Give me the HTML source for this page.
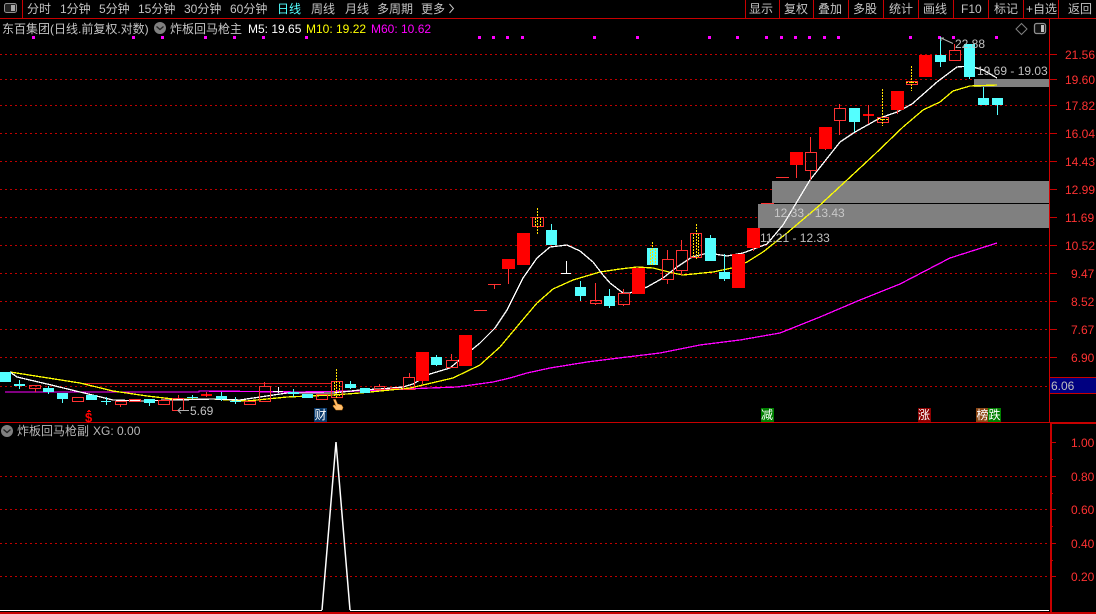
<!DOCTYPE html>
<html><head><meta charset="utf-8"><style>
html,body{margin:0;padding:0;background:#000;width:1096px;height:614px;overflow:hidden}
svg{display:block}
text{font-family:"Liberation Sans","WenQuanYi Zen Hei","Noto Sans CJK SC",sans-serif;font-size:12px;white-space:pre}
.c{shape-rendering:crispEdges}
</style></head><body>
<svg width="1096" height="614" viewBox="0 0 1096 614" xmlns="http://www.w3.org/2000/svg">
<rect width="1096" height="614" fill="#000"/>
<!-- grid -->
<g class="c" stroke="#c00000" stroke-width="1" stroke-dasharray="2 3" fill="none">
<path d="M0 54.5H1049M0 79.5H1049M0 105.5H1049M0 133.5H1049M0 161.5H1049M0 189.5H1049M0 217.5H1049M0 245.5H1049M0 273.5H1049M0 301.5H1049M0 329.5H1049M0 357.5H1049M0 386.5H1049"/>
<path d="M0 476.5H1049M0 509.5H1049M0 543.5H1049M0 576.5H1049"/>
</g>
<!-- frame -->
<g class="c" fill="#c80000">
<rect x="0" y="18" width="1096" height="1"/>
<rect x="22" y="0" width="1" height="18"/>
<rect x="745" y="0" width="1" height="18"/><rect x="779" y="0" width="1" height="18"/><rect x="813" y="0" width="1" height="18"/><rect x="848" y="0" width="1" height="18"/><rect x="883" y="0" width="1" height="18"/><rect x="918" y="0" width="1" height="18"/><rect x="953" y="0" width="1" height="18"/><rect x="988" y="0" width="1" height="18"/><rect x="1023" y="0" width="1" height="18"/><rect x="1058" y="0" width="1" height="18"/>
<rect x="0" y="422" width="1096" height="1"/>
<rect x="1050" y="423" width="46" height="1"/>
<rect x="1050" y="423" width="2" height="190"/>
<rect x="0" y="612" width="1096" height="2"/>
<path d="M1050 54h7v1h-7zM1050 79h7v1h-7zM1050 105h7v1h-7zM1050 133h7v1h-7zM1050 161h7v1h-7zM1050 189h7v1h-7zM1050 217h7v1h-7zM1050 245h7v1h-7zM1050 273h7v1h-7zM1050 301h7v1h-7zM1050 329h7v1h-7zM1050 357h7v1h-7z"/>
<path d="M1052 442h4v1h-4zM1052 476h4v1h-4zM1052 509h4v1h-4zM1052 543h4v1h-4zM1052 576h4v1h-4zM1052 459h1v1h-1zM1052 493h1v1h-1zM1052 526h1v1h-1zM1052 560h1v1h-1z"/>
</g>
<!-- blue price box -->
<rect class="c" x="1050" y="377" width="46" height="16" fill="#000080"/>
<rect class="c" x="1050" y="377" width="46" height="1" fill="#c80000"/>
<rect class="c" x="1050" y="393" width="46" height="1" fill="#c80000"/>
<!-- gray zones -->
<g class="c" fill="#808080">
<rect x="772" y="181" width="277" height="22"/>
<rect x="758" y="204" width="291" height="24"/>
<rect x="974" y="79" width="75" height="8"/>
</g>
<rect class="c" x="1049" y="19" width="1" height="403" fill="#d00000"/>
<!-- level line -->
<rect class="c" x="80" y="383" width="251" height="1" fill="#e02020"/>
<!-- magenta dots -->
<path class="c" fill="#ff00ff" d="M32 36h3v3h-3zM132 36h3v3h-3zM161 36h3v3h-3zM204 36h3v3h-3zM233 36h3v3h-3zM262 36h3v3h-3zM305 36h3v3h-3zM478 36h3v3h-3zM492 36h3v3h-3zM506 36h3v3h-3zM521 36h3v3h-3zM593 36h3v3h-3zM636 36h3v3h-3zM708 36h3v3h-3zM736 36h3v3h-3zM765 36h3v3h-3zM780 36h3v3h-3zM794 36h3v3h-3zM808 36h3v3h-3zM823 36h3v3h-3zM837 36h3v3h-3zM909 36h3v3h-3zM938 36h3v3h-3zM952 36h3v3h-3zM995 36h3v3h-3z"/>
<!-- MA lines -->
<g fill="none" class="c" stroke-width="1.3">
<polyline stroke="#ff00ff" points="5,392 199,392 199,391 300,392 360,391 430,388 457,387 493,382 510,378 527,373 550,368 587,362 627,357 660,353 700,345 740,340 780,333 820,317 860,300 900,284 950,258 997,243"/>
<polyline stroke="#ffff00" points="10,372 80,383 113,391 147,396 173,399 213,399 247,401 287,397 333,395 360,393 370,392 410,388 453,378 480,365 500,347 520,323 537,303 553,289 573,280 600,272 620,269 637,267 653,268 673,273 683,275 713,272 732,268 747,262 763,252 787,233 820,205 847,180 875,154 903,127 923,110 940,102 953,91 970,86 997,85"/>
<polyline stroke="#ffffff" points="10,372 17,377 47,384 80,392 113,400 143,401 173,400 213,399 240,400 260,397 287,393 333,393 360,390 380,389 403,387 413,384 430,374 450,368 463,357 480,343 495,328 507,310 523,278 537,258 550,247 567,245 580,251 593,262 603,275 610,283 623,293 630,293 647,287 663,278 677,267 692,257 708,253 727,256 743,253 767,244 783,225 810,180 840,142 855,132 880,118 897,112 912,104 937,82 957,67 970,66 983,70 997,78"/>
</g>
<!-- filled red -->
<path class="c" fill="#ff0000" d="M416 352h13v29h-13zM459 335h13v31h-13zM502 259h13v10h-13zM517 233h13v32h-13zM632 268h13v26h-13zM732 254h13v34h-13zM747 228h13v20h-13zM790 152h13v13h-13zM819 127h13v22h-13zM891 91h13v19h-13zM919 55h13v22h-13zM201 394h11v2h-11zM863 114h11v2h-11z"/>
<!-- red outlines and wicks -->
<path class="c" fill="none" stroke="#ff3232" d="M29.5 385.5H40.5V388.5H29.5ZM35.5 388.5V392M72.5 397.5H83.5V401.500H72.5ZM115.5 401.5H126.5V404.5H115.5ZM120.5 404.5V407M129.5 399.5H140.5V401.5H129.5ZM158.5 400.5H169.5V404.5H158.5ZM164.5 398V400.5M172.5 398.5H183.5V410.5H172.5ZM178.5 395V398.5M244.5 401.5H255.5V404.5H244.5ZM259.5 386.5H270.5V401.5H259.5ZM264.5 382V386.5M316.5 394.5H327.5V399.5H316.5ZM331.5 381.5H342.5V397.5H331.5ZM374.5 386.5H384.5V389.5H374.5ZM379.5 384V386.5M390 388.5H399M403.5 377.5H414.5V389.5H403.5ZM409.5 373V377.5M446.5 360.5H457.5V367.5H446.5ZM451.5 354V360.5M474 310.5H487M488 284.5H501M494.5 284V289M508.5 269V284M532.5 217.5H543.5V226.5H532.5ZM590.5 300.5H601.5V303.5H590.5ZM595.5 283V300.5M595.5 303.5V305M618.5 293.5H629.5V304.5H618.5ZM623.5 289V293.5M623.5 304.5V306M662.5 259.5H673.5V279.5H662.5ZM667.5 250V259.5M667.5 279.5V284M676.5 250.5H687.5V270.5H676.5ZM681.5 240V250.5M681.5 270.5V275M690.5 233.5H701.5V257.5H690.5ZM761 203.5H774M776 177.5H789M796.5 165V178M805.5 152.5H816.5V170.5H805.5ZM810.5 137V152.5M810.5 170.5V180M834.5 108.5H845.5V120.5H834.5ZM839.5 104V108.5M839.5 120.5V135M877.5 117.5H888.5V122.5H877.5ZM906.5 81.5H917.5V84.5H906.5ZM949.5 50.5H960.5V60.5H949.5ZM954.5 44V50.5M206.5 392V397M868.5 105V124M753.5 248V251M897.5 110V114M825.5 149V150M422.5 381V384"/>
<!-- cyan -->
<path class="c" fill="#54ffff" d="M0 372h11v10h-11zM14 384h11v2h-11zM43 388h11v4h-11zM57 393h11v6h-11zM86 395h11v5h-11zM144 399h11v4h-11zM216 396h11v3h-11zM288 392h11v2h-11zM302 394h11v4h-11zM345 384h11v4h-11zM360 388h10v5h-10zM431 357h11v8h-11zM546 230h11v15h-11zM575 287h11v9h-11zM604 296h11v10h-11zM647 248h11v17h-11zM705 238h11v23h-11zM719 272h11v7h-11zM849 108h11v14h-11zM935 55h11v7h-11zM964 44h11v33h-11zM978 98h11v7h-11zM992 98h11v7h-11zM101 401h10v1h-10zM187 397h11v1h-11zM230 401h11v1h-11z"/>
<path class="c" fill="none" stroke="#54ffff" d="M19.5 380V389M48.5 386V394M62.5 399V403M106.5 397V405M149.5 403V406M192.5 395V399M221.5 392V401M235.5 397V404M293.5 389V397M350.5 381V389M436.5 355V366M551.5 224V230M580.5 281V301M609.5 289V308M710.5 235V238M724.5 254V281M854.5 122V132M940.5 37V67M969.5 77V79M983.5 87V98M997.5 105V115"/>
<!-- white cross -->
<path class="c" fill="none" stroke="#fff" d="M273 391.5H283M278.5 387V393M561 273.5H571M566.5 261V273"/>
<!-- yellow dotted -->
<path class="c" fill="none" stroke="#ffe000" stroke-dasharray="2 1" d="M336.5 369V398M334.5 382V397M339.5 382V397M537.5 208V234M535.5 218V226M540.5 218V226M652.5 242V266M650.5 249V265M655.5 249V265M696.5 224V260M693.5 234V257M698.5 234V257M882.5 89V126M911.5 66V91M906 82.5H917M877 119.5H888"/>
<!-- markers -->
<g class="c">
<rect x="761" y="408" width="13" height="14" fill="#008000"/>
<rect x="918" y="408" width="13" height="14" fill="#8b0000"/>
<rect x="976" y="408" width="13" height="14" fill="#8b4513"/>
<rect x="988" y="408" width="13" height="14" fill="#008000"/>
<rect x="314" y="408" width="13" height="14" fill="#0a3a6b"/>
</g>
<g fill="#fff"><text x="761" y="419">减</text><text x="918" y="419">涨</text><text x="976.500" y="419">榜</text><text x="988.500" y="419">跌</text><text x="314.500" y="419">财</text></g>
<text x="85" y="422" fill="#ff0000" style="font-weight:bold;font-size:13px">$</text>
<path class="c" fill="#ff0000" d="M88 410h2v1h-2zM87 411h4v1h-4z"/>
<!-- hand -->
<path fill="#ffc070" stroke="#e08a20" stroke-width=".6" d="M333.500 399.500h2l2 4.500 4 1 1.500 2.500-1 2.500h-6l-3-4 1-1 2 1z"/>
<!-- arrows -->
<path fill="none" stroke="#b0b0b0" d="M189 410.500H178M181 407.500l-3 3 3 3"/>
<path fill="none" stroke="#b0b0b0" d="M942 38.500l11 5M941 41V38h3"/>
<!-- lower pane -->
<polyline fill="none" stroke="#fff" stroke-width="1.500" points="322,610 336,442 350,610"/>
<rect class="c" x="0" y="610" width="322" height="1" fill="#fff"/>
<rect class="c" x="350" y="610" width="699" height="1" fill="#fff"/>
<!-- labels -->
<g fill="#c4c4c4">
<text x="27" y="13">分时</text><text x="60" y="13">1分钟</text><text x="99" y="13">5分钟</text><text x="138" y="13">15分钟</text><text x="184" y="13">30分钟</text><text x="230" y="13">60分钟</text>
<text x="277" y="13" fill="#54ffff">日线</text>
<text x="311" y="13">周线</text><text x="345" y="13">月线</text><text x="377" y="13">多周期</text><text x="421" y="13">更多</text>
<text x="749" y="13">显示</text><text x="784" y="13">复权</text><text x="818" y="13">叠加</text><text x="853" y="13">多股</text><text x="889" y="13">统计</text><text x="923" y="13">画线</text><text x="961" y="13">F10</text><text x="994" y="13">标记</text><text x="1026" y="13">+自选</text><text x="1068" y="13">返回</text>
</g>
<path fill="none" stroke="#c4c4c4" d="M449.500 4l4 4.500-4 4.500"/>
<!-- top left icon -->
<rect x="4.500" y="3.500" width="12" height="9" rx="2" fill="#222" stroke="#909090"/>
<rect class="c" x="11" y="5" width="4" height="6" fill="#a8a8a8"/>
<!-- right icons -->
<path fill="none" stroke="#808080" d="M1021.500 23.500l5.500 5.500-5.500 5.500-5.500-5.500z"/>
<rect x="1034.500" y="23.500" width="11" height="10" rx="2" fill="#111" stroke="#909090" stroke-width="1.300"/>
<rect class="c" x="1041" y="25" width="3" height="7" fill="#c0c0c0"/>
<text x="2" y="33" fill="#c4c4c4">东百集团(日线.前复权.对数)</text>
<circle cx="160" cy="28" r="6" fill="#808080"/>
<path fill="none" stroke="#222" stroke-width="1.300" d="M156.500 26.500l3.500 3 3.500-3"/>
<text x="170" y="33" fill="#c4c4c4">炸板回马枪主</text>
<text x="248" y="33" fill="#ffffff">M5: 19.65</text>
<text x="306" y="33" fill="#ffff00">M10: 19.22</text>
<text x="371" y="33" fill="#ff00ff">M60: 10.62</text>
<g fill="#c0c0c0">
<text x="955" y="48">22.88</text>
<text x="977" y="75">19.69 - 19.03</text>
<text x="760" y="242">11.21 - 12.33</text>
<text x="190" y="415">5.69</text>
</g>
<text x="774" y="217" fill="#c8c8c8">12.33 - 13.43</text>
<g fill="#ff3232">
<text x="1065" y="59">21.56</text><text x="1065" y="84">19.60</text><text x="1065" y="110">17.82</text><text x="1065" y="138">16.04</text><text x="1065" y="166">14.43</text><text x="1065" y="194">12.99</text><text x="1065" y="222">11.69</text><text x="1065" y="250">10.52</text><text x="1071" y="278">9.47</text><text x="1071" y="306">8.52</text><text x="1071" y="334">7.67</text><text x="1071" y="362">6.90</text>
<text x="1071" y="447">1.00</text><text x="1071" y="481">0.80</text><text x="1071" y="514">0.60</text><text x="1071" y="548">0.40</text><text x="1071" y="581">0.20</text>
</g>
<text x="1051" y="390" fill="#c0c0c0">6.06</text>
<circle cx="7" cy="431" r="6" fill="#808080"/>
<path fill="none" stroke="#222" stroke-width="1.300" d="M3.500 429.500l3.500 3 3.500-3"/>
<text x="17" y="435" fill="#b8b8b8">炸板回马枪副</text>
<text x="93" y="435" fill="#b8b8b8">XG: 0.00</text>
</svg>
</body></html>
